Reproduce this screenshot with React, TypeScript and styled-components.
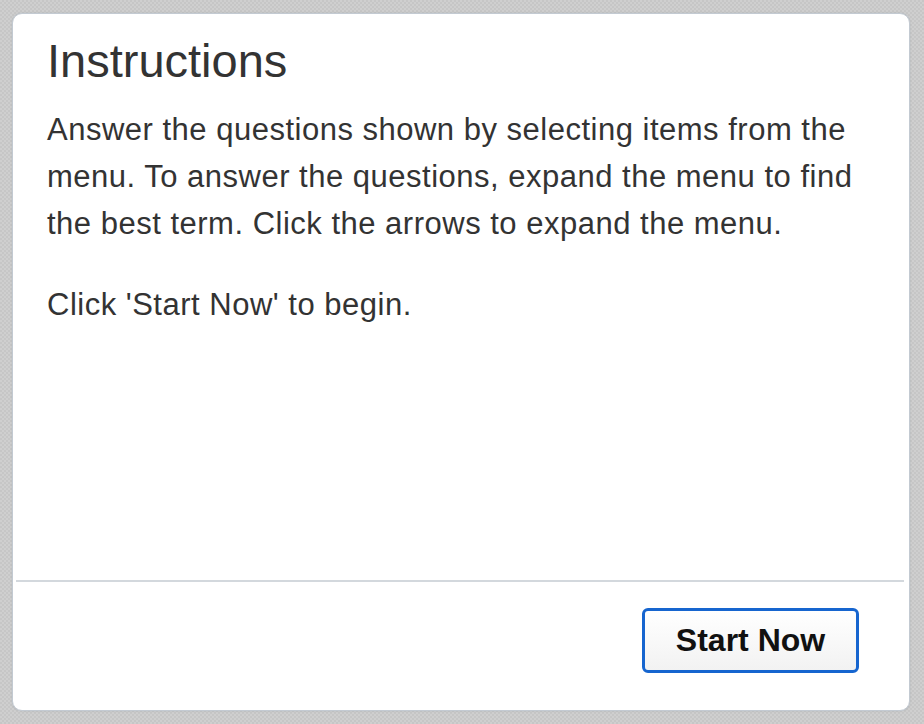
import React from "react";
import styled, { createGlobalStyle } from "styled-components";

const Global = createGlobalStyle`
  html, body {
    margin: 0;
    padding: 0;
    width: 924px;
    height: 724px;
    overflow: hidden;
    background-color: #cacaca;
    background-image: repeating-conic-gradient(#c6c6c6 0% 25%, #cfcfcf 0% 50%);
    background-size: 4px 4px;
  }
  * { box-sizing: border-box; }
`;

const Stage = styled.div`
  width: 924px;
  height: 724px;
  padding: 13px 14px 13px 12px;
  display: flex;
`;

const Dialog = styled.section`
  flex: 1;
  display: flex;
  flex-direction: column;
  background: #ffffff;
  border: 1px solid #c3cad2;
  border-radius: 10px;
  box-shadow: 0 0 2px rgba(150, 160, 170, 0.5);
  font-family: "Liberation Sans", Arial, sans-serif;
  color: #333333;
  overflow: hidden;
`;

const Body = styled.div`
  flex: 1;
  padding: 20px 34px 0 34px;
`;

const Title = styled.h1`
  margin: 0 0 18px 0;
  font-size: 47px;
  font-weight: 400;
  line-height: 54px;
  color: #333333;
`;

const Paragraph = styled.p`
  margin: 0 0 34px 0;
  font-size: 31px;
  letter-spacing: 0.5px;
  line-height: 47px;
  color: #333333;
`;

const Divider = styled.hr`
  margin: 1px 5px 0 3px;
  border: 0;
  height: 2px;
  background: #d3d8dd;
`;

const Footer = styled.div`
  display: flex;
  justify-content: flex-end;
  padding: 26px 50px 37px 0;
`;

const Button = styled.button`
  width: 217px;
  height: 65px;
  border: 3px solid #1665cf;
  border-radius: 6px;
  background: linear-gradient(#ffffff, #f2f2f2);
  font-family: "Liberation Sans", Arial, sans-serif;
  font-size: 32px;
  font-weight: 700;
  color: #111111;
  padding: 0;
  cursor: pointer;
`;

export default function App() {
  return (
    <>
      <Global />
      <Stage>
        <Dialog>
          <Body>
            <Title>Instructions</Title>
            <Paragraph>
              Answer the questions shown by selecting items from the menu. To
              answer the questions, expand the menu to find the best term. Click
              the arrows to expand the menu.
            </Paragraph>
            <Paragraph>Click 'Start Now' to begin.</Paragraph>
          </Body>
          <Divider />
          <Footer>
            <Button>Start Now</Button>
          </Footer>
        </Dialog>
      </Stage>
    </>
  );
}
